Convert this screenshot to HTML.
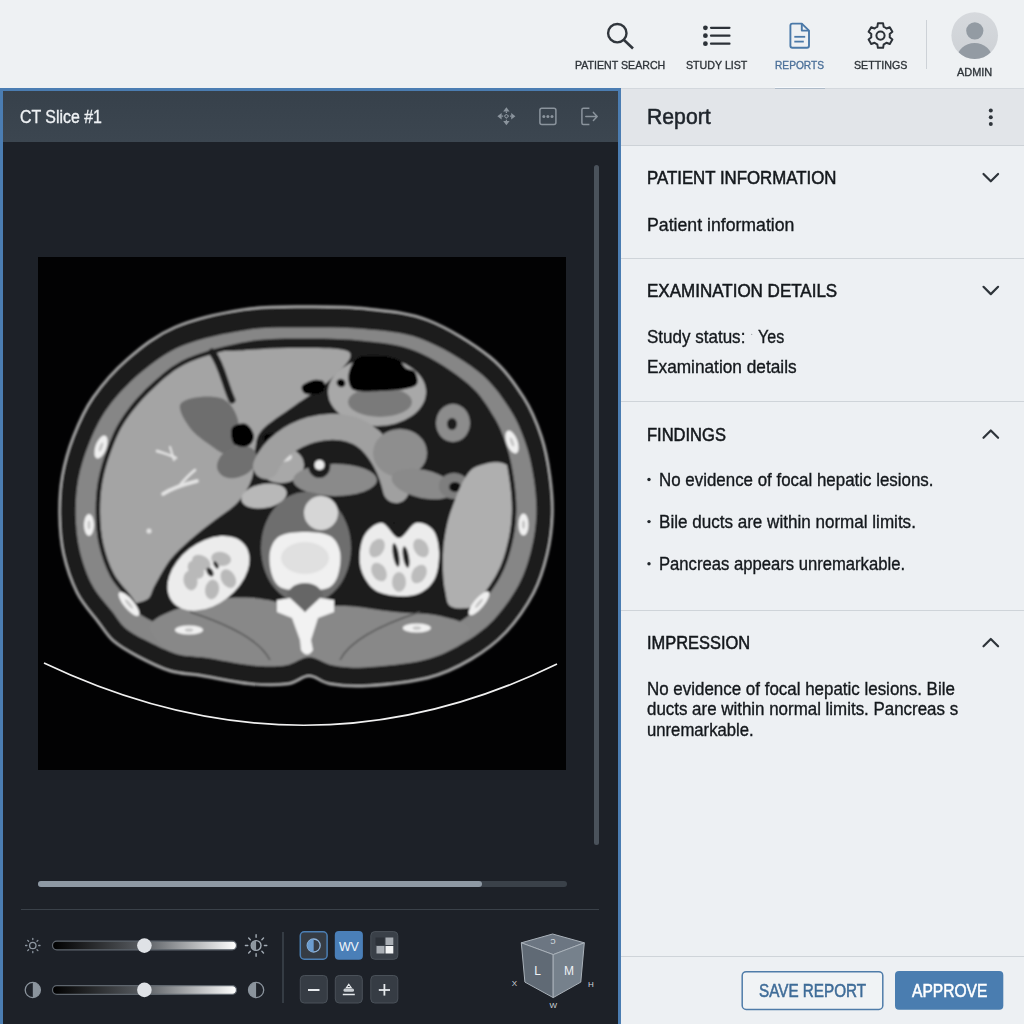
<!DOCTYPE html>
<html><head><meta charset="utf-8">
<style>
*{margin:0;padding:0;box-sizing:border-box}
html,body{width:1024px;height:1024px;overflow:hidden;background:#eef1f3;font-family:"Liberation Sans",sans-serif}
.a{position:absolute}
.t{position:absolute;white-space:nowrap;transform-origin:0 0;font-family:"Liberation Sans",sans-serif}
</style></head><body>
<!-- header -->
<div class="a" style="left:0;top:0;width:1024px;height:88px;background:#eef1f3"></div>
<div class="a" style="left:0;top:88px;width:1024px;height:1px;background:#d3d8dd"></div>
<div class="a" style="left:775px;top:87px;width:50px;height:1px;background:#f6f9fc"></div>
<div class="a" style="left:775px;top:88px;width:50px;height:1px;background:#aebbc8"></div>
<svg class="a" style="left:0;top:0" width="1024" height="88" viewBox="0 0 1024 88">
  <!-- search -->
  <circle cx="617.3" cy="33.2" r="9.2" fill="none" stroke="#30363c" stroke-width="2.4"/>
  <line x1="624" y1="40" x2="633" y2="48.5" stroke="#30363c" stroke-width="2.6" stroke-linecap="butt"/>
  <!-- list -->
  <g fill="#2c3238"><circle cx="705.4" cy="27.8" r="2.4"/><circle cx="705.4" cy="35.7" r="2.4"/><circle cx="705.4" cy="43.7" r="2.4"/></g>
  <g stroke="#2c3238" stroke-width="2.2" stroke-linecap="round"><line x1="711" y1="27.8" x2="729.5" y2="27.8"/><line x1="711" y1="35.7" x2="729.5" y2="35.7"/><line x1="711" y1="43.7" x2="729.5" y2="43.7"/></g>
  <!-- doc -->
  <path d="M792.4 23.6 H801.8 L809 30.6 V45.7 a2 2 0 0 1 -2 2 H792.4 a2 2 0 0 1 -2 -2 V25.6 a2 2 0 0 1 2 -2 Z" fill="none" stroke="#4a79a8" stroke-width="1.9" stroke-linejoin="round"/>
  <path d="M801.8 23.6 V30.6 H809" fill="none" stroke="#4a79a8" stroke-width="1.9" stroke-linejoin="round"/>
  <line x1="794.3" y1="36.8" x2="805.2" y2="36.8" stroke="#4a79a8" stroke-width="1.8"/>
  <line x1="794.3" y1="41.6" x2="803.8" y2="41.6" stroke="#4a79a8" stroke-width="1.8"/>
  <!-- gear -->
  <g transform="translate(880.5,35.6)">
    <path id="gear" d="" fill="none" stroke="#2c3238" stroke-width="2"/>
    <path d="M-3.18 -8.74 L-2.60 -12.23 L2.60 -12.23 L3.18 -8.74 A9.3 9.3 0 0 1 5.98 -7.12 L9.29 -8.36 L11.89 -3.86 L9.16 -1.61 A9.3 9.3 0 0 1 9.16 1.61 L11.89 3.86 L9.29 8.36 L5.98 7.12 A9.3 9.3 0 0 1 3.18 8.74 L2.60 12.23 L-2.60 12.23 L-3.18 8.74 A9.3 9.3 0 0 1 -5.98 7.12 L-9.29 8.36 L-11.89 3.86 L-9.16 1.61 A9.3 9.3 0 0 1 -9.16 -1.61 L-11.89 -3.86 L-9.29 -8.36 L-5.98 -7.12 A9.3 9.3 0 0 1 -3.18 -8.74 Z" fill="none" stroke="#2c3238" stroke-width="2" stroke-linejoin="round"/>
    <circle cx="0" cy="0" r="4.1" fill="none" stroke="#2c3238" stroke-width="2"/>
  </g>
  <!-- divider -->
  <line x1="926.5" y1="20" x2="926.5" y2="69" stroke="#cdd2d7" stroke-width="1"/>
  <!-- avatar -->
  <defs><clipPath id="avc"><circle cx="974.7" cy="35.6" r="23.3"/></clipPath><linearGradient id="avg" x1="0" y1="0" x2="0" y2="1"><stop offset="0" stop-color="#d6d9dd"/><stop offset="1" stop-color="#cdd1d5"/></linearGradient></defs>
  <circle cx="974.7" cy="35.6" r="23.3" fill="url(#avg)"/>
  <circle cx="974.8" cy="30.8" r="8.6" fill="#939ba3"/>
  <ellipse cx="974.6" cy="59" rx="17.8" ry="16" fill="#939ba3" clip-path="url(#avc)"/>
</svg>

<!-- left panel -->
<div class="a" style="left:0;top:88px;width:621px;height:936px;background:#4b7db2"></div>
<div class="a" style="left:3px;top:91px;width:615px;height:933px;background:#1d2128"></div>
<div class="a" style="left:3px;top:91px;width:615px;height:51px;background:linear-gradient(#37414b,#3c4650)"></div>
<svg class="a" style="left:0;top:88px" width="621" height="60" viewBox="0 88 621 60">
  <!-- move -->
  <g fill="#8b949d">
    <path d="M506.4 107.2 L509.6 111.4 L503.2 111.4 Z"/>
    <path d="M506.4 125.2 L509.6 121 L503.2 121 Z"/>
    <path d="M497.4 116.2 L501.6 113 L501.6 119.4 Z"/>
    <path d="M515.4 116.2 L511.2 113 L511.2 119.4 Z"/>
  </g>
  <g stroke="#8b949d" stroke-width="1.2" stroke-dasharray="1.6 1.2">
    <path d="M506.4 111.4 V121 M501.6 116.2 H511.2"/>
  </g>
  <circle cx="506.4" cy="116.2" r="1.6" fill="#3b4550" stroke="#8b949d" stroke-width="1"/>
  <!-- box -->
  <rect x="539.9" y="108.3" width="16" height="16.2" rx="2" fill="none" stroke="#8b949d" stroke-width="1.5"/>
  <g fill="#8b949d"><circle cx="543.8" cy="116.4" r="1.5"/><circle cx="547.9" cy="116.4" r="1.5"/><circle cx="552" cy="116.4" r="1.5"/></g>
  <!-- exit -->
  <path d="M589.4 108.3 H583.4 a1.5 1.5 0 0 0 -1.5 1.5 V123 a1.5 1.5 0 0 0 1.5 1.5 H589.4" fill="none" stroke="#8b949d" stroke-width="1.5"/>
  <path d="M585.8 116.4 H597.2 M593.4 112.4 L597.2 116.4 L593.4 120.4" fill="none" stroke="#8b949d" stroke-width="1.5" stroke-linecap="round" stroke-linejoin="round"/>
</svg>

<!-- CT image -->
<div class="a" style="left:38px;top:257px;width:528px;height:513px;background:#020304;overflow:hidden">
<svg width="528" height="513" viewBox="38 257 528 513" style="display:block"><defs><clipPath id="cav"><path d="M305.3 343.0 C324.1 342.9 343.9 343.1 362.1 345.2 C380.3 347.2 397.2 348.4 414.4 355.4 C431.6 362.3 452.5 376.4 465.1 387.1 C477.8 397.8 484.1 409.2 490.4 419.6 C496.7 430.1 499.9 439.4 503.2 449.8 C506.4 460.1 508.3 471.1 509.7 481.7 C511.2 492.3 512.2 503.0 511.8 513.4 C511.5 523.8 509.9 534.2 507.4 544.2 C505.0 554.2 502.3 563.6 497.0 573.4 C491.8 583.2 483.7 594.7 475.9 602.9 C468.0 611.1 459.6 617.0 449.9 622.6 C440.2 628.1 432.0 632.9 417.7 636.3 C403.4 639.6 377.4 641.9 364.0 642.7 C350.7 643.5 346.8 642.9 337.6 641.2 C328.5 639.5 318.3 632.5 309.1 632.5 C299.8 632.5 291.1 639.6 281.9 640.9 C272.8 642.3 266.2 642.1 254.1 640.8 C242.0 639.6 221.2 635.3 209.2 633.4 C197.2 631.6 191.0 632.4 182.2 629.9 C173.4 627.4 163.2 621.7 156.4 618.3 C149.6 614.9 145.4 613.1 141.2 609.4 C137.0 605.7 135.7 602.1 131.2 596.2 C126.7 590.3 118.5 582.3 113.9 573.8 C109.3 565.2 105.8 554.7 103.5 544.8 C101.2 534.8 100.4 524.4 100.2 514.1 C100.0 503.8 100.5 493.5 102.3 483.1 C104.0 472.7 107.0 462.1 110.9 451.7 C114.8 441.4 118.4 431.4 125.4 420.9 C132.5 410.3 142.5 398.2 153.3 388.4 C164.0 378.6 173.7 369.2 189.7 362.1 C205.7 355.0 230.0 349.0 249.3 345.9 C268.5 342.7 286.4 343.1 305.3 343.0 Z"/></clipPath><clipPath id="s1c"><path d="M305.2 327.5 C324.6 327.4 344.5 327.3 363.7 329.1 C383.0 331.0 401.7 331.7 420.7 338.8 C439.7 345.8 463.0 359.9 477.7 371.3 C492.4 382.8 500.9 395.7 508.8 407.5 C516.7 419.3 521.0 430.4 525.2 442.2 C529.3 453.9 531.8 466.1 533.7 478.1 C535.5 490.1 536.7 502.3 536.3 514.3 C535.9 526.3 534.2 538.3 531.2 550.1 C528.2 561.9 524.9 573.4 518.6 585.0 C512.3 596.7 503.0 610.1 493.6 619.9 C484.1 629.7 473.8 637.1 462.1 643.8 C450.4 650.5 439.6 656.2 423.5 660.1 C407.3 664.0 380.5 666.3 365.4 667.2 C350.4 668.1 342.7 667.0 333.2 665.3 C323.8 663.6 317.0 657.0 309.0 657.0 C301.0 657.0 295.0 663.8 285.4 665.2 C275.9 666.6 265.1 666.5 251.8 665.2 C238.4 664.0 218.2 659.6 205.5 657.6 C192.7 655.7 185.4 656.4 175.3 653.4 C165.3 650.5 153.7 644.4 145.3 640.1 C136.9 635.9 130.7 632.7 125.1 627.9 C119.6 623.1 117.3 618.3 111.8 611.1 C106.3 604.0 97.6 595.4 92.3 585.2 C86.9 575.1 82.4 562.1 79.7 550.4 C76.9 538.6 75.9 526.5 75.7 514.6 C75.5 502.6 76.2 490.6 78.4 478.7 C80.7 466.7 84.5 454.8 89.3 443.0 C94.2 431.2 99.1 419.8 107.6 408.1 C116.1 396.5 127.7 383.6 140.3 373.1 C152.8 362.7 165.1 352.6 182.8 345.4 C200.6 338.2 226.4 332.9 246.8 329.9 C267.2 326.9 285.7 327.6 305.2 327.5 Z"/></clipPath><filter id="bl1" x="-10%" y="-10%" width="120%" height="120%"><feGaussianBlur stdDeviation="0.9"/></filter></defs><rect x="38" y="257" width="528" height="513" fill="#020203"/>
<path d="M44 663 Q305 787 557 664" fill="none" stroke="#f0f0f0" stroke-width="1.7"/>
<g filter="url(#bl1)">
<path d="M305.0 306.5 C325.4 306.4 345.5 306.2 366.0 308.5 C386.5 310.8 407.4 312.0 428.0 320.0 C448.6 328.0 473.7 343.6 489.7 356.5 C505.7 369.4 515.4 384.3 524.0 397.7 C532.6 411.1 537.3 423.7 541.6 436.7 C545.9 449.7 548.2 462.8 550.0 475.8 C551.8 488.8 552.9 501.8 552.5 514.8 C552.1 527.8 550.5 541.0 547.4 554.0 C544.3 567.0 540.6 580.0 533.8 593.0 C526.9 606.0 516.8 620.9 506.4 632.0 C496.0 643.1 484.3 651.7 471.2 659.4 C458.2 667.1 445.4 673.6 428.0 678.0 C410.6 682.4 382.9 685.0 366.6 686.0 C350.3 687.0 339.6 685.7 330.0 684.0 C320.4 682.3 316.0 676.0 309.0 676.0 C302.0 676.0 297.8 682.7 288.0 684.0 C278.2 685.3 264.2 685.3 250.0 684.0 C235.8 682.7 215.8 678.2 202.5 676.0 C189.2 673.8 180.9 674.3 170.0 671.0 C159.1 667.7 146.3 661.1 136.9 656.1 C127.5 651.1 119.9 647.0 113.4 641.2 C106.9 635.5 103.9 629.7 97.8 621.7 C91.7 613.7 82.7 604.3 77.0 593.0 C71.3 581.7 66.3 567.0 63.4 554.0 C60.5 541.0 59.7 527.8 59.5 514.8 C59.3 501.8 59.9 488.8 62.2 475.8 C64.5 462.8 68.1 449.7 73.2 436.7 C78.3 423.7 83.6 410.7 92.7 397.7 C101.8 384.7 114.1 370.4 127.8 358.6 C141.5 346.8 155.7 335.2 175.0 327.0 C194.3 318.8 221.9 312.8 243.6 309.4 C265.3 306.0 284.6 306.6 305.0 306.5 Z" fill="#1a1a1a" stroke="#acacac" stroke-width="2.4"/>
<path d="M305.2 327.5 C324.6 327.4 344.5 327.3 363.7 329.1 C383.0 331.0 401.7 331.7 420.7 338.8 C439.7 345.8 463.0 359.9 477.7 371.3 C492.4 382.8 500.9 395.7 508.8 407.5 C516.7 419.3 521.0 430.4 525.2 442.2 C529.3 453.9 531.8 466.1 533.7 478.1 C535.5 490.1 536.7 502.3 536.3 514.3 C535.9 526.3 534.2 538.3 531.2 550.1 C528.2 561.9 524.9 573.4 518.6 585.0 C512.3 596.7 503.0 610.1 493.6 619.9 C484.1 629.7 473.8 637.1 462.1 643.8 C450.4 650.5 439.6 656.2 423.5 660.1 C407.3 664.0 380.5 666.3 365.4 667.2 C350.4 668.1 342.7 667.0 333.2 665.3 C323.8 663.6 317.0 657.0 309.0 657.0 C301.0 657.0 295.0 663.8 285.4 665.2 C275.9 666.6 265.1 666.5 251.8 665.2 C238.4 664.0 218.2 659.6 205.5 657.6 C192.7 655.7 185.4 656.4 175.3 653.4 C165.3 650.5 153.7 644.4 145.3 640.1 C136.9 635.9 130.7 632.7 125.1 627.9 C119.6 623.1 117.3 618.3 111.8 611.1 C106.3 604.0 97.6 595.4 92.3 585.2 C86.9 575.1 82.4 562.1 79.7 550.4 C76.9 538.6 75.9 526.5 75.7 514.6 C75.5 502.6 76.2 490.6 78.4 478.7 C80.7 466.7 84.5 454.8 89.3 443.0 C94.2 431.2 99.1 419.8 107.6 408.1 C116.1 396.5 127.7 383.6 140.3 373.1 C152.8 362.7 165.1 352.6 182.8 345.4 C200.6 338.2 226.4 332.9 246.8 329.9 C267.2 326.9 285.7 327.6 305.2 327.5 Z" fill="#868686"/>
<path d="M305.2 338.5 C324.2 338.4 344.1 338.6 362.6 340.7 C381.1 342.8 398.5 344.0 416.1 351.2 C433.7 358.3 455.0 372.7 468.1 383.7 C481.1 394.7 487.7 406.5 494.2 417.3 C500.8 428.1 504.1 437.8 507.4 448.4 C510.8 459.1 512.7 470.2 514.2 481.1 C515.7 492.0 516.7 502.9 516.3 513.6 C515.9 524.3 514.4 534.9 511.8 545.3 C509.2 555.6 506.4 565.4 501.0 575.5 C495.5 585.7 487.3 597.6 479.1 606.0 C471.0 614.5 462.2 620.7 452.2 626.5 C442.1 632.2 433.4 637.2 418.7 640.7 C404.1 644.1 378.0 646.4 364.3 647.2 C350.6 648.0 346.0 647.3 336.8 645.6 C327.6 643.9 318.1 637.0 309.1 637.0 C300.0 637.0 291.8 644.0 282.6 645.4 C273.4 646.8 266.0 646.5 253.6 645.3 C241.3 644.0 220.6 639.7 208.5 637.9 C196.4 636.0 189.9 636.8 180.9 634.2 C171.9 631.6 161.5 625.9 154.4 622.3 C147.2 618.7 142.7 616.7 138.2 612.8 C133.8 608.9 132.3 605.1 127.6 598.9 C122.9 592.8 114.7 584.8 110.0 575.9 C105.2 567.0 101.5 556.1 99.1 545.8 C96.7 535.5 95.9 524.8 95.7 514.2 C95.5 503.6 96.0 493.0 97.8 482.3 C99.7 471.7 102.7 460.8 106.7 450.2 C110.7 439.5 114.4 429.2 121.7 418.4 C128.9 407.5 139.2 395.1 150.2 385.1 C161.3 375.0 171.5 365.3 187.9 358.0 C204.3 350.7 229.0 344.7 248.5 341.4 C268.1 338.2 286.2 338.6 305.2 338.5 Z" fill="#1a1a1a"/>
<path d="M80.0 452.0 C82.8 438.7 86.7 415.3 95.0 400.0 C103.3 384.7 116.7 369.2 130.0 360.0 C143.3 350.8 160.8 346.7 175.0 345.0 C189.2 343.3 205.8 349.0 215.0 350.0 C224.2 351.0 217.5 351.3 230.0 351.0 C242.5 350.7 270.2 347.8 290.0 348.0 C309.8 348.2 342.3 346.7 349.0 352.0 C355.7 357.3 339.2 371.0 330.0 380.0 C320.8 389.0 305.3 397.7 294.0 406.0 C282.7 414.3 268.5 422.7 262.0 430.0 C255.5 437.3 256.7 442.0 255.0 450.0 C253.3 458.0 254.8 469.3 252.0 478.0 C249.2 486.7 244.2 495.0 238.0 502.0 C231.8 509.0 223.0 513.7 215.0 520.0 C207.0 526.3 197.5 533.3 190.0 540.0 C182.5 546.7 175.8 552.5 170.0 560.0 C164.2 567.5 159.0 578.3 155.0 585.0 C151.0 591.7 151.8 597.5 146.0 600.0 C140.2 602.5 129.3 606.7 120.0 600.0 C110.7 593.3 96.7 573.3 90.0 560.0 C83.3 546.7 82.0 533.3 80.0 520.0 C78.0 506.7 78.0 491.3 78.0 480.0 C78.0 468.7 77.2 465.3 80.0 452.0 Z" fill="#a4a4a4" clip-path="url(#cav)"/>
<g stroke="#e4e4e4" fill="none" stroke-linecap="round"><path d="M163 494 C172 488 185 484 197 481" stroke-width="3.5"/><path d="M180 485 C186 478 190 474 195 470" stroke-width="2.5"/><path d="M157 451 C163 453 170 455 176 458" stroke-width="2.5"/><path d="M170 447 L174 460" stroke-width="2"/></g>
<ellipse cx="149" cy="531" rx="2.5" ry="2.5" fill="#e0e0e0"/>
<ellipse cx="190" cy="412" rx="2" ry="2" fill="#e8e8e8"/>
<path d="M212 352 C222 365 225 385 232 400" stroke="#1a1a1a" stroke-width="7" fill="none" stroke-linecap="round"/>
<path d="M180.0 405.0 C181.7 399.8 192.5 397.8 200.0 397.0 C207.5 396.2 218.7 396.2 225.0 400.0 C231.3 403.8 236.2 412.5 238.0 420.0 C239.8 427.5 237.7 439.2 236.0 445.0 C234.3 450.8 232.3 455.0 228.0 455.0 C223.7 455.0 216.3 449.5 210.0 445.0 C203.7 440.5 195.0 434.7 190.0 428.0 C185.0 421.3 178.3 410.2 180.0 405.0 Z" fill="#6e6e6e"/>
<ellipse cx="237" cy="462" rx="21" ry="15" fill="#707070" transform="rotate(-25 237 462)"/>
<path d="M232.0 428.0 C234.0 424.7 242.3 422.7 246.0 424.0 C249.7 425.3 253.7 432.3 254.0 436.0 C254.3 439.7 251.3 444.7 248.0 446.0 C244.7 447.3 236.7 447.0 234.0 444.0 C231.3 441.0 230.0 431.3 232.0 428.0 Z" fill="#050505"/>
<path d="M264.0 436.0 C265.3 434.0 273.3 433.0 276.0 434.0 C278.7 435.0 281.3 440.0 280.0 442.0 C278.7 444.0 270.7 447.0 268.0 446.0 C265.3 445.0 262.7 438.0 264.0 436.0 Z" fill="#050505"/>
<ellipse cx="281" cy="465" rx="23" ry="18" fill="#a8a8a8"/>
<ellipse cx="282" cy="457" rx="10" ry="5" fill="#dedede"/>
<ellipse cx="377" cy="392" rx="49" ry="34" fill="#a8a8a8"/>
<ellipse cx="380" cy="402" rx="32" ry="15" fill="#7a7a7a"/>
<path d="M349.0 372.0 C350.3 367.3 352.8 360.7 358.0 358.0 C363.2 355.3 373.3 355.7 380.0 356.0 C386.7 356.3 393.7 358.0 398.0 360.0 C402.3 362.0 403.2 366.0 406.0 368.0 C408.8 370.0 413.2 369.3 415.0 372.0 C416.8 374.7 418.7 381.2 417.0 384.0 C415.3 386.8 411.2 387.8 405.0 389.0 C398.8 390.2 387.8 390.7 380.0 391.0 C372.2 391.3 363.0 391.8 358.0 391.0 C353.0 390.2 351.5 389.2 350.0 386.0 C348.5 382.8 347.7 376.7 349.0 372.0 Z" fill="#000"/>
<path d="M302.0 386.0 C303.3 383.7 310.3 380.7 314.0 380.0 C317.7 379.3 322.7 380.0 324.0 382.0 C325.3 384.0 325.0 390.0 322.0 392.0 C319.0 394.0 309.3 395.0 306.0 394.0 C302.7 393.0 300.7 388.3 302.0 386.0 Z" fill="#000"/>
<ellipse cx="341" cy="383" rx="4.5" ry="4" fill="#000" transform="rotate(30 341 383)"/>
<ellipse cx="335" cy="480" rx="42" ry="16" fill="#8a8a8a"/>
<path d="M266 466 C280 432 338 412 370 440 C384 454 392 472 396 490" stroke="#a0a0a0" stroke-width="26" fill="none" stroke-linecap="round"/>
<ellipse cx="319.3" cy="466" rx="11" ry="12" fill="#1e1e1e"/>
<ellipse cx="319.5" cy="465" rx="5" ry="5" fill="#ececec"/>
<ellipse cx="400" cy="453" rx="27" ry="24" fill="#8e8e8e"/>
<ellipse cx="423" cy="484" rx="32" ry="14" fill="#8a8a8a" transform="rotate(12 423 484)"/>
<ellipse cx="453" cy="423" rx="17" ry="19" fill="#8c8c8c"/>
<ellipse cx="452" cy="424" rx="5" ry="6" fill="#1a1a1a"/>
<ellipse cx="454" cy="486" rx="15" ry="13" fill="#7e7e7e"/>
<ellipse cx="455" cy="487" rx="6" ry="5" fill="#111"/>
<path d="M478.0 466.0 C484.7 463.7 497.2 460.0 505.0 464.0 C512.8 468.0 521.2 479.0 525.0 490.0 C528.8 501.0 528.8 515.8 528.0 530.0 C527.2 544.2 524.7 563.3 520.0 575.0 C515.3 586.7 510.8 594.5 500.0 600.0 C489.2 605.5 464.2 609.7 455.0 608.0 C445.8 606.3 447.0 598.8 445.0 590.0 C443.0 581.2 442.7 565.8 443.0 555.0 C443.3 544.2 445.0 534.2 447.0 525.0 C449.0 515.8 452.0 507.8 455.0 500.0 C458.0 492.2 461.2 483.7 465.0 478.0 C468.8 472.3 471.3 468.3 478.0 466.0 Z" fill="#afafaf" clip-path="url(#cav)"/>
<ellipse cx="306" cy="548" rx="45" ry="56" fill="#6e6e6e"/>
<ellipse cx="264" cy="496" rx="23" ry="12" fill="#b8b8b8" transform="rotate(-10 264 496)"/>
<path d="M150.0 628.0 C149.2 618.0 171.7 611.0 185.0 606.0 C198.3 601.0 216.2 599.0 230.0 598.0 C243.8 597.0 257.7 598.0 268.0 600.0 C278.3 602.0 285.8 604.7 292.0 610.0 C298.2 615.3 300.7 632.0 305.0 632.0 C309.3 632.0 311.3 614.3 318.0 610.0 C324.7 605.7 332.2 605.7 345.0 606.0 C357.8 606.3 379.2 610.3 395.0 612.0 C410.8 613.7 427.5 613.0 440.0 616.0 C452.5 619.0 470.0 622.7 470.0 630.0 C470.0 637.3 451.7 653.0 440.0 660.0 C428.3 667.0 415.0 669.3 400.0 672.0 C385.0 674.7 363.3 676.0 350.0 676.0 C336.7 676.0 327.3 673.7 320.0 672.0 C312.7 670.3 311.0 665.7 306.0 666.0 C301.0 666.3 301.0 672.7 290.0 674.0 C279.0 675.3 256.7 675.3 240.0 674.0 C223.3 672.7 205.0 673.7 190.0 666.0 C175.0 658.3 150.8 638.0 150.0 628.0 Z" fill="#888888" clip-path="url(#s1c)"/>
<path d="M190 612 C230 625 260 640 270 660" stroke="#555" stroke-width="1.5" fill="none"/>
<path d="M420 612 C380 625 350 640 340 660" stroke="#555" stroke-width="1.5" fill="none"/>
<ellipse cx="208.5" cy="573.3" rx="46" ry="31" fill="#ececec" transform="rotate(-38 208.5 573.3)"/>
<ellipse cx="190.5" cy="580.5" rx="7" ry="10" fill="#b9b9b9" transform="rotate(-10 190.5 580.5)"/>
<ellipse cx="201.3" cy="562.5" rx="7" ry="10" fill="#b9b9b9" transform="rotate(-60 201.3 562.5)"/>
<ellipse cx="221.1" cy="558.9" rx="7" ry="10" fill="#b9b9b9" transform="rotate(-80 221.1 558.9)"/>
<ellipse cx="228.3" cy="578.6999999999999" rx="7" ry="10" fill="#b9b9b9" transform="rotate(-30 228.3 578.6999999999999)"/>
<ellipse cx="212.1" cy="589.5" rx="7" ry="10" fill="#b9b9b9" transform="rotate(10 212.1 589.5)"/>
<ellipse cx="195.9" cy="569.6999999999999" rx="7" ry="10" fill="#b9b9b9" transform="rotate(-38 195.9 569.6999999999999)"/>
<ellipse cx="210" cy="572" rx="3" ry="5" fill="#2a2a2a" transform="rotate(-30 210 572)"/>
<ellipse cx="216" cy="565" rx="2" ry="4" fill="#2a2a2a" transform="rotate(-30 216 565)"/>
<path d="M360.0 552.0 C360.7 545.5 362.3 537.8 366.0 533.0 C369.7 528.2 376.5 522.2 382.0 523.0 C387.5 523.8 393.3 538.0 399.0 538.0 C404.7 538.0 410.3 524.3 416.0 523.0 C421.7 521.7 429.2 525.2 433.0 530.0 C436.8 534.8 438.7 544.0 439.0 552.0 C439.3 560.0 438.2 571.2 435.0 578.0 C431.8 584.8 426.2 590.0 420.0 593.0 C413.8 596.0 405.5 596.5 398.0 596.0 C390.5 595.5 381.0 594.0 375.0 590.0 C369.0 586.0 364.5 578.3 362.0 572.0 C359.5 565.7 359.3 558.5 360.0 552.0 Z" fill="#ececec"/>
<ellipse cx="399" cy="528" rx="6" ry="8" fill="#1a1a1a"/>
<ellipse cx="377" cy="548" rx="7" ry="10" fill="#bcbcbc" transform="rotate(30 377 548)"/>
<ellipse cx="421" cy="548" rx="7" ry="10" fill="#bcbcbc" transform="rotate(-30 421 548)"/>
<ellipse cx="379" cy="572" rx="7" ry="10" fill="#bcbcbc" transform="rotate(-30 379 572)"/>
<ellipse cx="419" cy="574" rx="7" ry="10" fill="#bcbcbc" transform="rotate(30 419 574)"/>
<ellipse cx="399" cy="582" rx="7" ry="10" fill="#bcbcbc"/>
<ellipse cx="396" cy="555" rx="3" ry="12" fill="#222" transform="rotate(-10 396 555)"/>
<ellipse cx="406" cy="557" rx="3" ry="11" fill="#222" transform="rotate(-10 406 557)"/>
<ellipse cx="321" cy="513" rx="17" ry="17" fill="#d6d6d6"/>
<path d="M305.0 532.0 C313.3 532.0 324.2 532.7 330.0 536.0 C335.8 539.3 338.7 545.5 340.0 552.0 C341.3 558.5 340.0 569.0 338.0 575.0 C336.0 581.0 333.5 585.5 328.0 588.0 C322.5 590.5 312.7 590.0 305.0 590.0 C297.3 590.0 287.5 590.5 282.0 588.0 C276.5 585.5 274.0 581.0 272.0 575.0 C270.0 569.0 268.7 558.5 270.0 552.0 C271.3 545.5 274.2 539.3 280.0 536.0 C285.8 532.7 296.7 532.0 305.0 532.0 Z" fill="#f0f0f0"/>
<ellipse cx="305" cy="558" rx="24" ry="16" fill="#e0e0e0"/>
<ellipse cx="305" cy="597" rx="18" ry="14" fill="#666"/>
<path d="M277 600 L290 598 L305 612 L320 598 L334 600 L334 612 L318 618 L311 640 L313 650 Q307 659 301 650 L300 640 L292 618 L277 612 Z" fill="#f2f2f2"/>
<ellipse cx="101" cy="447" rx="5.5" ry="12" fill="#f0f0f0" transform="rotate(20 101 447)"/>
<ellipse cx="101" cy="447" rx="1.65" ry="4.800000000000001" fill="#c4c4c4" transform="rotate(20 101 447)"/>
<ellipse cx="89" cy="525" rx="5" ry="11" fill="#f0f0f0"/>
<ellipse cx="89" cy="525" rx="1.5" ry="4.4" fill="#c4c4c4"/>
<ellipse cx="129" cy="604" rx="5" ry="15" fill="#f0f0f0" transform="rotate(-40 129 604)"/>
<ellipse cx="129" cy="604" rx="1.5" ry="6.0" fill="#c4c4c4" transform="rotate(-40 129 604)"/>
<ellipse cx="189" cy="630" rx="14" ry="4.5" fill="#f0f0f0"/>
<ellipse cx="189" cy="630" rx="4.2" ry="1.8" fill="#c4c4c4"/>
<ellipse cx="512" cy="442" rx="5.5" ry="12" fill="#f0f0f0" transform="rotate(-20 512 442)"/>
<ellipse cx="512" cy="442" rx="1.65" ry="4.800000000000001" fill="#c4c4c4" transform="rotate(-20 512 442)"/>
<ellipse cx="523.5" cy="524.6" rx="5" ry="11" fill="#f0f0f0"/>
<ellipse cx="523.5" cy="524.6" rx="1.5" ry="4.4" fill="#c4c4c4"/>
<ellipse cx="479" cy="603.3" rx="5" ry="15" fill="#f0f0f0" transform="rotate(40 479 603.3)"/>
<ellipse cx="479" cy="603.3" rx="1.5" ry="6.0" fill="#c4c4c4" transform="rotate(40 479 603.3)"/>
<ellipse cx="416.8" cy="628" rx="14" ry="4.5" fill="#f0f0f0"/>
<ellipse cx="416.8" cy="628" rx="4.2" ry="1.8" fill="#c4c4c4"/>
</g></svg>
</div>

<!-- scrollbar -->
<div class="a" style="left:594px;top:165px;width:5px;height:680px;border-radius:3px;background:#4a525b"></div>
<!-- progress -->
<div class="a" style="left:38px;top:880.5px;width:528.5px;height:6px;border-radius:3px;background:#3a4149"></div>
<div class="a" style="left:38px;top:880.5px;width:443.5px;height:6px;border-radius:3px;background:#8e99a4"></div>
<div class="a" style="left:21px;top:909px;width:578px;height:1px;background:#3a4149"></div>
<div class="a" style="left:282px;top:932px;width:2px;height:71px;background:#353c44"></div>

<svg class="a" style="left:0;top:900px" width="621" height="124" viewBox="0 900 621 124">
  <defs>
    <linearGradient id="sl" x1="0" x2="1"><stop offset="0" stop-color="#000"/><stop offset="0.5" stop-color="#5a5e63"/><stop offset="1" stop-color="#fff"/></linearGradient>
  </defs>
  <!-- small sun -->
  <g stroke="#8d96a0" stroke-width="1.3" fill="none" stroke-linecap="round">
    <circle cx="32.8" cy="945.5" r="3.2"/>
    <path d="M32.8 938.3 v1.3 M32.8 951.4 v1.3 M25.6 945.5 h1.3 M38.7 945.5 h1.3 M27.7 940.4 l0.9 0.9 M37 949.7 l0.9 0.9 M27.7 950.6 l0.9 -0.9 M37 941.3 l0.9 -0.9"/>
  </g>
  <!-- big sun -->
  <g stroke="#a3acb5" stroke-width="1.4" fill="none" stroke-linecap="round">
    <circle cx="256.1" cy="945.5" r="4.9"/>
    <path d="M256.1 934.8 v2.4 M256.1 953.8 v2.4 M245.4 945.5 h2.4 M264.4 945.5 h2.4 M248.7 938.1 l1.6 1.6 M261.9 951.3 l1.6 1.6 M248.7 952.9 l1.6 -1.6 M261.9 939.7 l1.6 -1.6"/>
  </g>
  <path d="M256.1 940.6 a4.9 4.9 0 0 0 0 9.8 Z" fill="#8e979f"/>
  <!-- sliders -->
  <rect x="52.5" y="941.2" width="184" height="8.6" rx="4.3" fill="url(#sl)" stroke="#5e656d" stroke-width="1.2"/>
  <rect x="52.5" y="985.7" width="184" height="8.6" rx="4.3" fill="url(#sl)" stroke="#5e656d" stroke-width="1.2"/>
  <circle cx="144.4" cy="945.6" r="7.3" fill="#dfe2e6"/>
  <circle cx="144.4" cy="989.9" r="7.3" fill="#dfe2e6"/>
  <!-- contrast icons -->
  <circle cx="32.8" cy="990" r="7.6" fill="#1f232a" stroke="#8b949d" stroke-width="1.3"/>
  <path d="M32.8 982.4 a7.6 7.6 0 0 1 0 15.2 Z" fill="#8b949d"/>
  <circle cx="256.1" cy="990" r="7.6" fill="#1f232a" stroke="#8b949d" stroke-width="1.3"/>
  <path d="M256.1 982.4 a7.6 7.6 0 0 0 0 15.2 Z" fill="#8b949d"/>
  <!-- tool buttons -->
  <rect x="300.3" y="931.8" width="26.8" height="27.4" rx="4" fill="#363c44" stroke="#4c7fb4" stroke-width="1.5"/>
  <circle cx="313.7" cy="945.5" r="6.5" fill="none" stroke="#8fb3d9" stroke-width="1.3"/>
  <path d="M313.7 939 a6.5 6.5 0 0 0 0 13 Z" fill="#6b9ccf"/>
  <rect x="334.8" y="931.1" width="28.1" height="28.7" rx="4" fill="#4a7fb8"/>
  <text x="348.9" y="951" text-anchor="middle" font-family="Liberation Sans" font-size="13" fill="#f2f6fa" textLength="20" lengthAdjust="spacingAndGlyphs">WV</text>
  <rect x="370.8" y="931.6" width="27" height="27.7" rx="4" fill="#3a4048" stroke="#4a5159" stroke-width="1"/>
  <rect x="375.5" y="937.5" width="9" height="7.5" fill="#2c3138"/>
  <rect x="385.5" y="937.5" width="7.8" height="7.5" fill="#a9aeb4"/>
  <rect x="376.5" y="946" width="8" height="7.5" fill="#a9aeb4"/>
  <rect x="385.5" y="946" width="7.8" height="7.5" fill="#f3f4f5"/>
  <rect x="300.3" y="975.5" width="27" height="27.5" rx="4" fill="#363c44" stroke="#4a5159" stroke-width="1"/>
  <rect x="335.3" y="975.5" width="27" height="27.5" rx="4" fill="#363c44" stroke="#4a5159" stroke-width="1"/>
  <rect x="370.8" y="975.5" width="27" height="27.5" rx="4" fill="#363c44" stroke="#4a5159" stroke-width="1"/>
  <line x1="308" y1="990" x2="319.5" y2="990" stroke="#e6e9ec" stroke-width="2"/>
  <line x1="378.8" y1="990" x2="390" y2="990" stroke="#e6e9ec" stroke-width="1.8"/>
  <line x1="384.4" y1="984" x2="384.4" y2="995.6" stroke="#e6e9ec" stroke-width="1.8"/>
  <path d="M348.8 984.3 l2.4 3.3 h-4.8 Z" fill="none" stroke="#e6e9ec" stroke-width="1.1"/>
  <rect x="343.5" y="988.5" width="10.5" height="3.2" rx="1.5" fill="#c9ced3"/>
  <line x1="342.8" y1="994.5" x2="354.8" y2="994.5" stroke="#e6e9ec" stroke-width="1.5"/>
  <!-- cube -->
  <path d="M552.6 934 L584.3 942.8 L553.2 954.6 L521.3 942.8 Z" fill="#6c7682" stroke="#aab2ba" stroke-width="1"/>
  <path d="M521.3 942.8 L553.2 954.6 L553.2 997.6 L524.9 982.1 Z" fill="#606a75" stroke="#aab2ba" stroke-width="1"/>
  <path d="M553.2 954.6 L584.3 942.8 L580.8 982.1 L553.2 997.6 Z" fill="#76818c" stroke="#aab2ba" stroke-width="1"/>
  <g font-family="Liberation Sans" fill="#eef1f4" text-anchor="middle">
    <text x="537.6" y="975" font-size="12">L</text>
    <text x="569" y="975" font-size="12">M</text>
    <text x="553" y="943" font-size="7" transform="rotate(180 553 941)">C</text>
    <text x="514.5" y="986" font-size="8" fill="#d0d5da">X</text>
    <text x="590.8" y="986.5" font-size="8" fill="#d0d5da">H</text>
    <text x="553.2" y="1007.5" font-size="8" fill="#d0d5da">W</text>
  </g>
</svg>

<!-- right panel -->
<div class="a" style="left:621px;top:89px;width:403px;height:935px;background:#edf0f3"></div>
<div class="a" style="left:621px;top:89px;width:403px;height:56px;background:#e2e5e9"></div>
<div class="a" style="left:621px;top:145px;width:403px;height:1px;background:#cdd2d7"></div>
<div class="a" style="left:621px;top:258px;width:403px;height:1px;background:#cfd4d9"></div>
<div class="a" style="left:621px;top:401px;width:403px;height:1px;background:#cfd4d9"></div>
<div class="a" style="left:621px;top:610px;width:403px;height:1px;background:#cfd4d9"></div>
<div class="a" style="left:621px;top:956px;width:403px;height:1px;background:#cfd4d9"></div>
<svg class="a" style="left:621px;top:88px" width="403" height="936" viewBox="621 88 403 936">
  <g fill="#30363c"><circle cx="990.8" cy="110.5" r="2"/><circle cx="990.8" cy="117.2" r="2"/><circle cx="990.8" cy="124" r="2"/></g>
  <g fill="none" stroke="#2e343a" stroke-width="2.2" stroke-linecap="round" stroke-linejoin="round">
    <path d="M983.5 174 L990.8 181.3 L998.1 174"/>
    <path d="M983.5 286.8 L990.8 294.1 L998.1 286.8"/>
    <path d="M983.5 437.8 L990.8 430.5 L998.1 437.8"/>
    <path d="M983.5 646.3 L990.8 639 L998.1 646.3"/>
  </g>
  <g fill="#22272c"><circle cx="649" cy="479.5" r="1.7"/><circle cx="649" cy="521.6" r="1.7"/><circle cx="649" cy="563.7" r="1.7"/></g>
  <circle cx="751.7" cy="334.4" r="0.6" fill="#9aa0a6"/>
  <rect x="742.2" y="971.7" width="140.6" height="37.8" rx="4" fill="#f0f3f5" stroke="#4f7ca9" stroke-width="1.5"/>
  <rect x="895" y="971" width="108.3" height="38.7" rx="4" fill="#4a7db0"/>
</svg>
<div class="t" style="left:574.90px;top:60.03px;font-size:11.19px;line-height:11.19px;color:#2e3439;transform:scaleX(0.9490);-webkit-text-stroke:0.35px #2e3439;">PATIENT SEARCH</div>
<div class="t" style="left:685.60px;top:60.03px;font-size:11.19px;line-height:11.19px;color:#2e3439;transform:scaleX(0.9523);-webkit-text-stroke:0.35px #2e3439;">STUDY LIST</div>
<div class="t" style="left:775.00px;top:60.33px;font-size:11.19px;line-height:11.19px;color:#4b7099;transform:scaleX(0.9091);-webkit-text-stroke:0.35px #4b7099;">REPORTS</div>
<div class="t" style="left:853.60px;top:60.33px;font-size:11.19px;line-height:11.19px;color:#2e3439;transform:scaleX(0.9541);-webkit-text-stroke:0.35px #2e3439;">SETTINGS</div>
<div class="t" style="left:957.00px;top:66.50px;font-size:11.34px;line-height:11.34px;color:#2e3439;transform:scaleX(0.9664);-webkit-text-stroke:0.35px #2e3439;">ADMIN</div>
<div class="t" style="left:20.40px;top:107.54px;font-size:18.02px;line-height:18.02px;color:#eef1f4;transform:scaleX(0.8834);-webkit-text-stroke:0.35px #eef1f4;">CT Slice #1</div>
<div class="t" style="left:647.40px;top:106.45px;font-size:22.38px;line-height:22.38px;color:#1e242b;transform:scaleX(0.9483);-webkit-text-stroke:0.55px #1e242b;">Report</div>
<div class="t" style="left:646.90px;top:168.73px;font-size:18.75px;line-height:18.75px;color:#14181c;transform:scaleX(0.8972);-webkit-text-stroke:0.55px #14181c;">PATIENT INFORMATION</div>
<div class="t" style="left:646.80px;top:215.54px;font-size:18.02px;line-height:18.02px;color:#14181c;transform:scaleX(0.9815);-webkit-text-stroke:0.35px #14181c;">Patient information</div>
<div class="t" style="left:646.80px;top:282.23px;font-size:18.75px;line-height:18.75px;color:#14181c;transform:scaleX(0.9068);-webkit-text-stroke:0.55px #14181c;">EXAMINATION DETAILS</div>
<div class="t" style="left:646.60px;top:327.84px;font-size:18.02px;line-height:18.02px;color:#14181c;transform:scaleX(0.9444);-webkit-text-stroke:0.35px #14181c;">Study status:</div>
<div class="t" style="left:758.30px;top:327.84px;font-size:18.02px;line-height:18.02px;color:#14181c;transform:scaleX(0.8913);-webkit-text-stroke:0.35px #14181c;">Yes</div>
<div class="t" style="left:646.60px;top:358.34px;font-size:18.02px;line-height:18.02px;color:#14181c;transform:scaleX(0.9576);-webkit-text-stroke:0.35px #14181c;">Examination details</div>
<div class="t" style="left:646.80px;top:425.53px;font-size:18.75px;line-height:18.75px;color:#14181c;transform:scaleX(0.8807);-webkit-text-stroke:0.55px #14181c;">FINDINGS</div>
<div class="t" style="left:659.00px;top:471.14px;font-size:18.02px;line-height:18.02px;color:#14181c;transform:scaleX(0.9386);-webkit-text-stroke:0.35px #14181c;">No evidence of focal hepatic lesions.</div>
<div class="t" style="left:659.00px;top:513.04px;font-size:18.02px;line-height:18.02px;color:#14181c;transform:scaleX(0.9468);-webkit-text-stroke:0.35px #14181c;">Bile ducts are within normal limits.</div>
<div class="t" style="left:659.00px;top:555.24px;font-size:18.02px;line-height:18.02px;color:#14181c;transform:scaleX(0.9235);-webkit-text-stroke:0.35px #14181c;">Pancreas appears unremarkable.</div>
<div class="t" style="left:646.80px;top:634.33px;font-size:18.75px;line-height:18.75px;color:#14181c;transform:scaleX(0.8766);-webkit-text-stroke:0.55px #14181c;">IMPRESSION</div>
<div class="t" style="left:646.80px;top:680.64px;font-size:17.44px;line-height:17.44px;color:#14181c;transform:scaleX(0.9712);-webkit-text-stroke:0.35px #14181c;">No evidence of focal hepatic lesions. Bile</div>
<div class="t" style="left:646.80px;top:701.24px;font-size:17.44px;line-height:17.44px;color:#14181c;transform:scaleX(0.9699);-webkit-text-stroke:0.35px #14181c;">ducts are within normal limits. Pancreas s</div>
<div class="t" style="left:646.80px;top:722.34px;font-size:17.44px;line-height:17.44px;color:#14181c;transform:scaleX(0.9571);-webkit-text-stroke:0.35px #14181c;">unremarkable.</div>
<div class="t" style="left:758.70px;top:982.33px;font-size:18.75px;line-height:18.75px;color:#3f6c98;transform:scaleX(0.8136);-webkit-text-stroke:0.55px #3f6c98;">SAVE REPORT</div>
<div class="t" style="left:911.70px;top:982.33px;font-size:18.75px;line-height:18.75px;color:#ffffff;transform:scaleX(0.8306);-webkit-text-stroke:0.55px #ffffff;">APPROVE</div>
</body></html>
